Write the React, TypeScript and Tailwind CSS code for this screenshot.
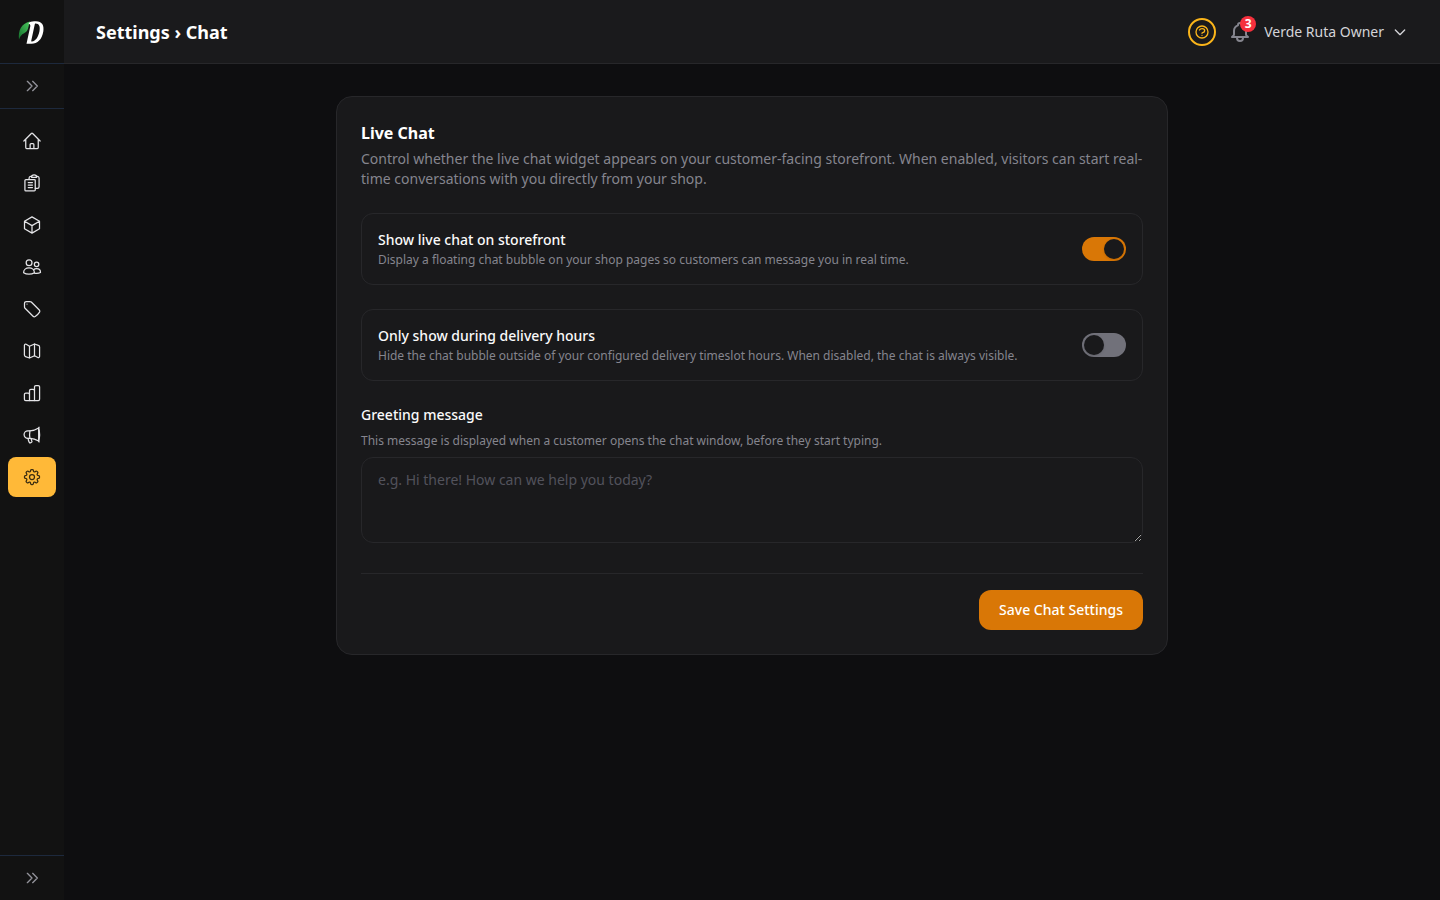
import { useState, type ReactNode } from 'react';
import {
  HiOutlineHome,
  HiOutlineCube,
  HiOutlineTag,
  HiOutlineCog8Tooth,
} from 'react-icons/hi2';
import {
  HiOutlineBell,
  HiOutlineChevronDoubleRight,
  HiOutlineChevronDown,
  HiOutlineQuestionMarkCircle,
} from 'react-icons/hi';
import clsx from 'clsx';

type IconProps = { className?: string };

function StrokeIcon({ className, children }: IconProps & { children: ReactNode }) {
  return (
    <svg
      viewBox="0 0 24 24"
      fill="none"
      stroke="currentColor"
      strokeWidth="1.5"
      strokeLinecap="round"
      strokeLinejoin="round"
      className={className}
      aria-hidden="true"
    >
      {children}
    </svg>
  );
}

function OrdersIcon({ className }: IconProps) {
  return (
    <StrokeIcon className={className}>
      <path d="M8.500 7.500V6A2 2 0 0 1 10.300 4.100L11.400 4M17.600 4L18.700 4.100A2 2 0 0 1 20.500 6V16.500A2 2 0 0 1 18.500 18.500H16" />
      <path d="M11.400 4.800C11.400 3.300 12.500 2.250 14.500 2.250S17.600 3.300 17.600 4.800V5.200H11.400Z" />
      <path d="M4.700 7.800H14.700A1.200 1.200 0 0 1 15.900 9V20.300A1.200 1.200 0 0 1 14.700 21.500H4.700A1.200 1.200 0 0 1 3.500 20.300V9A1.200 1.200 0 0 1 4.700 7.800Z" />
      <path d="M7.500 11.500H12.500M7.500 14.500H12.500M7.500 17.500H12.500" />
    </StrokeIcon>
  );
}

function CustomersIcon({ className }: IconProps) {
  return (
    <StrokeIcon className={className}>
      <circle cx="8.500" cy="6.800" r="3.500" />
      <circle cx="17.500" cy="8.800" r="2.700" />
      <path d="M1.900 18.800C1.900 15.300 4.800 13.200 8.400 13.200S14.900 15.300 14.900 18.800C13 20 10.800 20.600 8.400 20.600S3.800 20 1.900 18.800Z" />
      <path d="M13.800 15.400C14.700 14.500 16 14 17.500 14C20.300 14 22.200 15.900 22.200 18.600C20.300 19.500 17.500 19.800 14.900 19.300" />
    </StrokeIcon>
  );
}

function MapIcon({ className }: IconProps) {
  return (
    <StrokeIcon className={className}>
      <path d="M9 6.300V20.400L4.200 18.700A2 2 0 0 1 2.900 16.900V5.200A1.500 1.500 0 0 1 5 3.900L9 6.300L15 3.600L19.700 5.300A2 2 0 0 1 21.100 7.200V18.600A1.500 1.500 0 0 1 19 19.800L15 17.700L9 20.400" />
      <path d="M15 3.600V17.700" />
    </StrokeIcon>
  );
}

function ChartIcon({ className }: IconProps) {
  return (
    <StrokeIcon className={className}>
      <path d="M9 21H4.500A1.600 1.600 0 0 1 2.900 19.400V13.700A1.600 1.600 0 0 1 4.500 12.100H7.400A1.600 1.600 0 0 1 9 13.700V21Z" />
      <path d="M9 13.500V9.300A1.600 1.600 0 0 1 10.600 7.700H13.400A1.600 1.600 0 0 1 15 9.300V21H9" />
      <path d="M15 9.300V4.600A1.600 1.600 0 0 1 16.600 3H19.500A1.600 1.600 0 0 1 21.100 4.600V19.400A1.600 1.600 0 0 1 19.500 21H15" />
    </StrokeIcon>
  );
}

function MarketingIcon({ className }: IconProps) {
  return (
    <StrokeIcon className={className}>
      <path d="M9.500 7H7A4.500 4.500 0 0 0 7 16H9.500C13.500 16 16.800 17.200 20 19.300V3.700C16.800 5.800 13.500 7 9.500 7Z" />
      <path d="M9.500 7C9 10 9 13 9.500 16" />
      <path d="M20 3.700L20.500 2.700M20 19.300L20.500 20.300M20 3.700C21.500 8.800 21.500 14.200 20 19.300" />
      <path d="M7.300 16C7.500 18 8 19.700 8.800 21C9.600 21.900 11.900 21 12 19.800C11.400 18.700 11.100 17.500 11 16.200" />
    </StrokeIcon>
  );
}

const navItems = [
  { label: 'Home', icon: HiOutlineHome },
  { label: 'Orders', icon: OrdersIcon },
  { label: 'Products', icon: HiOutlineCube },
  { label: 'Customers', icon: CustomersIcon },
  { label: 'Discounts', icon: HiOutlineTag },
  { label: 'Delivery map', icon: MapIcon },
  { label: 'Analytics', icon: ChartIcon },
  { label: 'Marketing', icon: MarketingIcon },
  { label: 'Settings', icon: HiOutlineCog8Tooth, active: true },
];

function Logo() {
  return (
    <svg viewBox="0 0 28 28" className="w-7 h-7" aria-hidden="true">
      <defs>
        <linearGradient id="leaf" x1="0" y1="1" x2="1" y2="0">
          <stop offset="0" stopColor="#14702c" />
          <stop offset="1" stopColor="#4cc85f" />
        </linearGradient>
      </defs>
      <path d="M1 21.500C0 13 3 5.500 12 3.500C10.500 7 10.500 12 8 14C5.500 15.800 3 16 1 21.500Z" fill="url(#leaf)" />
      <path
        fillRule="evenodd"
        d="M11.500 4.200C13 3.600 15.500 3.300 18 3.300C24 3.300 26.300 7.500 25.300 13.500C24 21.500 19.500 25.700 13.500 25.700H8.500L12.300 8.300C12.500 7 11.800 6 10.500 5.800ZM17.500 5.500C17.300 5.500 17 5.600 16.800 6.200L13.300 22.500C13.100 23.400 13.300 23.700 13.900 23.600C17.800 23 20.200 19 21.400 13.500C22.400 8.500 21.300 5.500 17.500 5.500Z"
        fill="#fff"
      />
    </svg>
  );
}

function Sidebar() {
  return (
    <aside className="w-16 shrink-0 flex flex-col bg-[#121212]">
      <a href="#" aria-label="Dashboard" className="h-16 shrink-0 flex items-center justify-center border-b border-slate-800">
        <Logo />
      </a>
      <button aria-label="Expand sidebar" className="h-[45px] shrink-0 flex items-center justify-center border-b border-slate-800 text-[#92929a]">
        <HiOutlineChevronDoubleRight className="w-4 h-4" />
      </button>
      <nav className="flex-1 flex flex-col gap-0.5 px-2 py-3">
        {navItems.map(({ label, icon: Icon, active }) => (
          <a
            key={label}
            href="#"
            aria-label={label}
            className={clsx(
              'h-10 flex items-center justify-center rounded-lg',
              active ? 'bg-[#ffb938] text-[#3a2c10]' : 'text-zinc-200'
            )}
          >
            <Icon className="w-5 h-5" />
          </a>
        ))}
      </nav>
      <button aria-label="Expand menu" className="h-[45px] shrink-0 flex items-center justify-center border-t border-slate-800 text-[#92929a]">
        <HiOutlineChevronDoubleRight className="w-4 h-4" />
      </button>
    </aside>
  );
}

function Header() {
  return (
    <header className="h-16 shrink-0 flex items-center justify-between px-8 bg-[#1a1a1c] border-b border-zinc-800">
      <h1 className="text-lg font-bold text-white">Settings › Chat</h1>
      <div className="flex items-center gap-3">
        <button aria-label="Help" className="w-7 h-7 flex items-center justify-center rounded-full border-2 border-[#fbb51a] text-[#fbb51a]">
          <HiOutlineQuestionMarkCircle className="w-4 h-4" />
        </button>
        <button aria-label="Notifications" className="relative text-[#85858e]">
          <HiOutlineBell className="w-6 h-6" />
          <span className="absolute -top-1 -right-1 w-4 h-4 flex items-center justify-center rounded-full bg-[#f5303d] text-white text-xs font-bold">
            3
          </span>
        </button>
        <button className="flex items-center gap-2 text-sm text-zinc-300">
          Verde Ruta Owner
          <HiOutlineChevronDown className="w-4 h-4" />
        </button>
      </div>
    </header>
  );
}

type ToggleRowProps = {
  id: string;
  title: string;
  description: string;
  checked: boolean;
  onChange: (checked: boolean) => void;
};

function ToggleRow({ id, title, description, checked, onChange }: ToggleRowProps) {
  return (
    <div className="flex items-center justify-between gap-4 p-4 rounded-xl border border-[#27272a]">
      <div>
        <label htmlFor={id} className="block text-sm font-medium text-zinc-50">{title}</label>
        <p className="mt-0.5 text-xs text-[#85858e]">{description}</p>
      </div>
      <input
        id={id}
        type="checkbox"
        role="switch"
        checked={checked}
        onChange={(e) => onChange(e.target.checked)}
        className="appearance-none shrink-0 flex items-center w-11 h-6 px-0.5 rounded-full bg-[#71717a] checked:bg-[#d97706] checked:justify-end before:w-5 before:h-5 before:rounded-full before:bg-[#19191b] before:shadow-sm"
      />
    </div>
  );
}

export default function App() {
  const [showChat, setShowChat] = useState(true);
  const [deliveryOnly, setDeliveryOnly] = useState(false);
  const [greeting, setGreeting] = useState('');

  return (
    <div className="min-h-screen flex bg-[#0e0e10] font-['Noto_Sans',sans-serif]">
      <Sidebar />

      <div className="flex-1 min-w-0 flex flex-col">
        <Header />

        <main className="w-full max-w-4xl mx-auto p-8">
          <form onSubmit={(e) => e.preventDefault()} className="p-6 rounded-2xl bg-[#19191b] border border-[#27272a]">
            <h2 className="text-base font-bold text-white">Live Chat</h2>
            <p className="mt-1 text-sm text-[#85858e]">
              Control whether the live chat widget appears on your customer-facing storefront. When enabled, visitors can start real-time conversations with you directly from your shop.
            </p>

            <div className="mt-6 flex flex-col gap-6">
              <ToggleRow
                id="show-chat"
                title="Show live chat on storefront"
                description="Display a floating chat bubble on your shop pages so customers can message you in real time."
                checked={showChat}
                onChange={setShowChat}
              />
              <ToggleRow
                id="delivery-only"
                title="Only show during delivery hours"
                description="Hide the chat bubble outside of your configured delivery timeslot hours. When disabled, the chat is always visible."
                checked={deliveryOnly}
                onChange={setDeliveryOnly}
              />

              <div>
                <label htmlFor="greeting" className="block text-sm font-medium text-zinc-50">Greeting message</label>
                <p className="my-2 text-xs text-[#85858e]">
                  This message is displayed when a customer opens the chat window, before they start typing.
                </p>
                <textarea
                  id="greeting"
                  rows={3}
                  value={greeting}
                  onChange={(e) => setGreeting(e.target.value)}
                  placeholder="e.g. Hi there! How can we help you today?"
                  className="block w-full px-4 py-3 rounded-xl bg-[#19191b] border border-[#27272a] text-sm text-zinc-50 placeholder:text-[#52525b]"
                />
              </div>
            </div>

            <div className="mt-[30px] pt-4 flex justify-end border-t border-[#27272a]">
              <button type="submit" className="h-10 px-5 rounded-xl bg-[#d97706] text-sm font-medium text-white">
                Save Chat Settings
              </button>
            </div>
          </form>
        </main>
      </div>
    </div>
  );
}
